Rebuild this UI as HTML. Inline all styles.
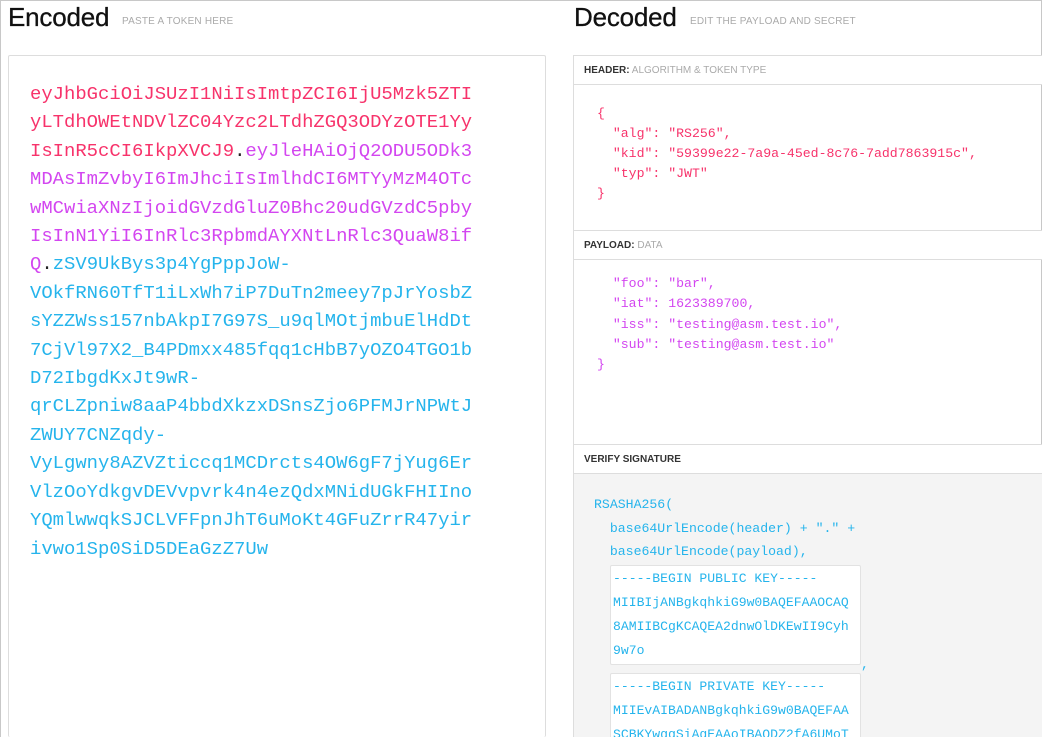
<!DOCTYPE html>
<html style="width:1042px;height:737px;overflow:hidden"><head><meta charset="utf-8"><style>
*{margin:0;padding:0;box-sizing:border-box}
body{width:1042px;height:737px;overflow:hidden;background:#fff;font-family:"Liberation Sans",sans-serif;position:relative}
.frame{position:absolute;left:0;top:0;width:1042px;height:737px;border:1px solid #c8c8c8;border-bottom:none}
.abs{position:absolute}
h1{position:absolute;font-weight:400;font-size:26px;color:#111;letter-spacing:-0.2px;-webkit-text-stroke:0.3px #111}
.sub{position:absolute;font-size:10px;color:#aaa;letter-spacing:0.2px}
.mono{font-family:"Liberation Mono",monospace;white-space:pre}
.r{color:#f7336b}.p{color:#d346f0}.c{color:#25b4ec}.k{color:#222}
.lbl{position:absolute;left:574px;right:0;height:30px;border-top:1px solid #ddd;border-bottom:1px solid #ddd;font-size:10px;line-height:29px;padding-left:10px;color:#333;background:#fff}
.lbl span{color:#aaa}
.box{position:absolute;left:610px;width:251px;background:#fff;border:1px solid #e2e2e2;border-radius:2px}
</style></head><body>
<div class="frame"></div>
<h1 style="left:8px;top:2px">Encoded</h1>
<div class="sub" style="left:122px;top:16px">PASTE A TOKEN HERE</div>
<h1 style="left:574px;top:2px">Decoded</h1>
<div class="sub" style="left:690px;top:16px">EDIT THE PAYLOAD AND SECRET</div>

<div class="abs" style="left:8px;top:55px;width:538px;height:682px;border:1px solid #ddd;border-bottom:none;border-radius:2px"></div>
<div class="abs mono" style="left:30px;top:80px;font-size:18.9px;line-height:28.4px"><span class="r">eyJhbGciOiJSUzI1NiIsImtpZCI6IjU5Mzk5ZTI
yLTdhOWEtNDVlZC04Yzc2LTdhZGQ3ODYzOTE1Yy
IsInR5cCI6IkpXVCJ9</span><span class="k">.</span><span class="p">eyJleHAiOjQ2ODU5ODk3
MDAsImZvbyI6ImJhciIsImlhdCI6MTYyMzM4OTc
wMCwiaXNzIjoidGVzdGluZ0Bhc20udGVzdC5pby
IsInN1YiI6InRlc3RpbmdAYXNtLnRlc3QuaW8if
Q</span><span class="k">.</span><span class="c">zSV9UkBys3p4YgPppJoW-
VOkfRN60TfT1iLxWh7iP7DuTn2meey7pJrYosbZ
sYZZWss157nbAkpI7G97S_u9qlMOtjmbuElHdDt
7CjVl97X2_B4PDmxx485fqq1cHbB7yOZO4TGO1b
D72IbgdKxJt9wR-
qrCLZpniw8aaP4bbdXkzxDSnsZjo6PFMJrNPWtJ
ZWUY7CNZqdy-
VyLgwny8AZVZticcq1MCDrcts4OW6gF7jYug6Er
VlzOoYdkgvDEVvpvrk4n4ezQdxMNidUGkFHIIno
YQmlwwqkSJCLVFFpnJhT6uMoKt4GFuZrrR47yir
ivwo1Sp0SiD5DEaGzZ7Uw</span></div>

<div class="abs" style="left:573px;top:55px;width:470px;height:682px;border-left:1px solid #ddd;border-top:1px solid #ddd"></div>
<div class="lbl" style="top:55px"><b style="font-weight:600">HEADER:</b> <span>ALGORITHM &amp; TOKEN TYPE</span></div>
<div class="abs mono r" style="left:597px;top:104px;font-size:13.2px;line-height:20px">{
  "alg": "RS256",
  "kid": "59399e22-7a9a-45ed-8c76-7add7863915c",
  "typ": "JWT"
}</div>
<div class="lbl" style="top:230px"><b style="font-weight:600">PAYLOAD:</b> <span>DATA</span></div>
<div class="abs mono p" style="left:597px;top:274px;font-size:13.2px;line-height:20.3px">  "foo": "bar",
  "iat": 1623389700,
  "iss": "testing@asm.test.io",
  "sub": "testing@asm.test.io"
}</div>
<div class="abs" style="left:574px;top:473px;right:0;height:264px;background:#f4f4f4"></div>
<div class="lbl" style="top:444px"><b style="font-weight:600">VERIFY SIGNATURE</b></div>
<div class="abs mono c" style="left:594px;top:493px;font-size:13.2px;line-height:23.5px">RSASHA256(
  base64UrlEncode(header) + "." +
  base64UrlEncode(payload),</div>
<div class="box" style="top:565px;height:100px"></div>
<div class="abs mono c" style="left:613px;top:567px;font-size:13.1px;line-height:24px">-----BEGIN PUBLIC KEY-----
MIIBIjANBgkqhkiG9w0BAQEFAAOCAQ
8AMIIBCgKCAQEA2dnwOlDKEwII9Cyh
9w7o</div>
<div class="abs mono c" style="left:861px;top:657px;font-size:13px">,</div>
<div class="box" style="top:673px;height:70px"></div>
<div class="abs mono c" style="left:613px;top:675px;font-size:13.1px;line-height:24px">-----BEGIN PRIVATE KEY-----
MIIEvAIBADANBgkqhkiG9w0BAQEFAA
SCBKYwggSiAgEAAoIBAQDZ2fA6UMoT</div>
</body></html>
